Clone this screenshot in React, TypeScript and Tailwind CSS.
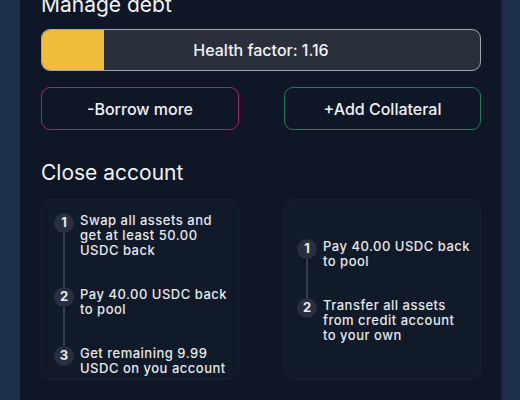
import React from "react";

type Step = { n: number; lines: string[] };

function Steps({ steps }: { steps: Step[] }) {
  return (
    <div className="flex flex-col gap-[29px]">
      {steps.map((s, i) => (
        <div key={s.n} className="relative flex items-start gap-[6px]">
          {i < steps.length - 1 && (
            <div className="absolute left-[9px] top-[20px] bottom-[-29px] w-[2px] bg-[#363e4d]" />
          )}
          <div className="relative z-10 flex h-[20px] w-[20px] shrink-0 items-center justify-center rounded-full bg-[#283040] text-[13px] font-bold text-[#e8eaee]">
            {s.n}
          </div>
          <div className="text-[13px] font-medium leading-[15px] tracking-[0.5px] text-[#e6e8ec]">
            {s.lines.map((l) => (
              <div key={l} className="whitespace-nowrap">
                {l}
              </div>
            ))}
          </div>
        </div>
      ))}
    </div>
  );
}

export default function App() {
  return (
    <div
      className="flex h-[400px] w-[520px] overflow-hidden bg-[#1d2e4b] pl-[20px]"
      style={{ fontFamily: "Inter, 'Noto Sans', sans-serif" }}
    >
      <div className="flex h-[400px] w-[482px] flex-col border-r border-[#1a2333] bg-[#0f1726] pl-[21px] pr-[20px]">
        <div className="mt-[-9px] text-[21px] leading-[28px] font-normal text-[#f1f2f4]">
          Manage debt
        </div>
        <div className="relative mt-[10px] flex h-[42px] items-center justify-center overflow-hidden rounded-[9px] border border-[#a3a7b0] bg-[#2a2f3c]">
          <div className="absolute left-0 top-0 bottom-0 w-[62px] bg-[#f0bd3a]" />
          <span className="relative text-[16px] font-medium text-[#f1f2f5]">
            Health factor: 1.16
          </span>
        </div>
        <div className="mt-4 flex justify-between">
          <button className="flex h-[43px] w-[198px] items-center justify-center rounded-[9px] border border-[#a8246a] bg-transparent text-[16px] font-medium text-[#eef0f3]">
            -Borrow more
          </button>
          <button className="flex h-[43px] w-[197px] items-center justify-center rounded-[9px] border border-[#227a5f] bg-transparent text-[16px] font-medium text-[#eef0f3]">
            +Add Collateral
          </button>
        </div>
        <div className="mt-[29px] text-[21px] leading-[28px] font-normal text-[#f1f2f4]">
          Close account
        </div>
        <div className="mt-3 flex justify-between">
          <div className="h-[181px] w-[198px] rounded-[10px] border border-[#19212f] bg-[#111a28] pl-3 pr-[2px] pt-[13px]">
            <Steps
              steps={[
                { n: 1, lines: ["Swap all assets and", "get at least 50.00", "USDC back"] },
                { n: 2, lines: ["Pay 40.00 USDC back", "to pool"] },
                { n: 3, lines: ["Get remaining 9.99", "USDC on you account"] },
              ]}
            />
          </div>
          <div className="flex h-[181px] w-[197px] flex-col justify-center rounded-[10px] border border-[#19212f] bg-[#111a28] pl-3 pr-[2px] pt-[2px]">
            <Steps
              steps={[
                { n: 1, lines: ["Pay 40.00 USDC back", "to pool"] },
                { n: 2, lines: ["Transfer all assets", "from credit account", "to your own"] },
              ]}
            />
          </div>
        </div>
      </div>
    </div>
  );
}
